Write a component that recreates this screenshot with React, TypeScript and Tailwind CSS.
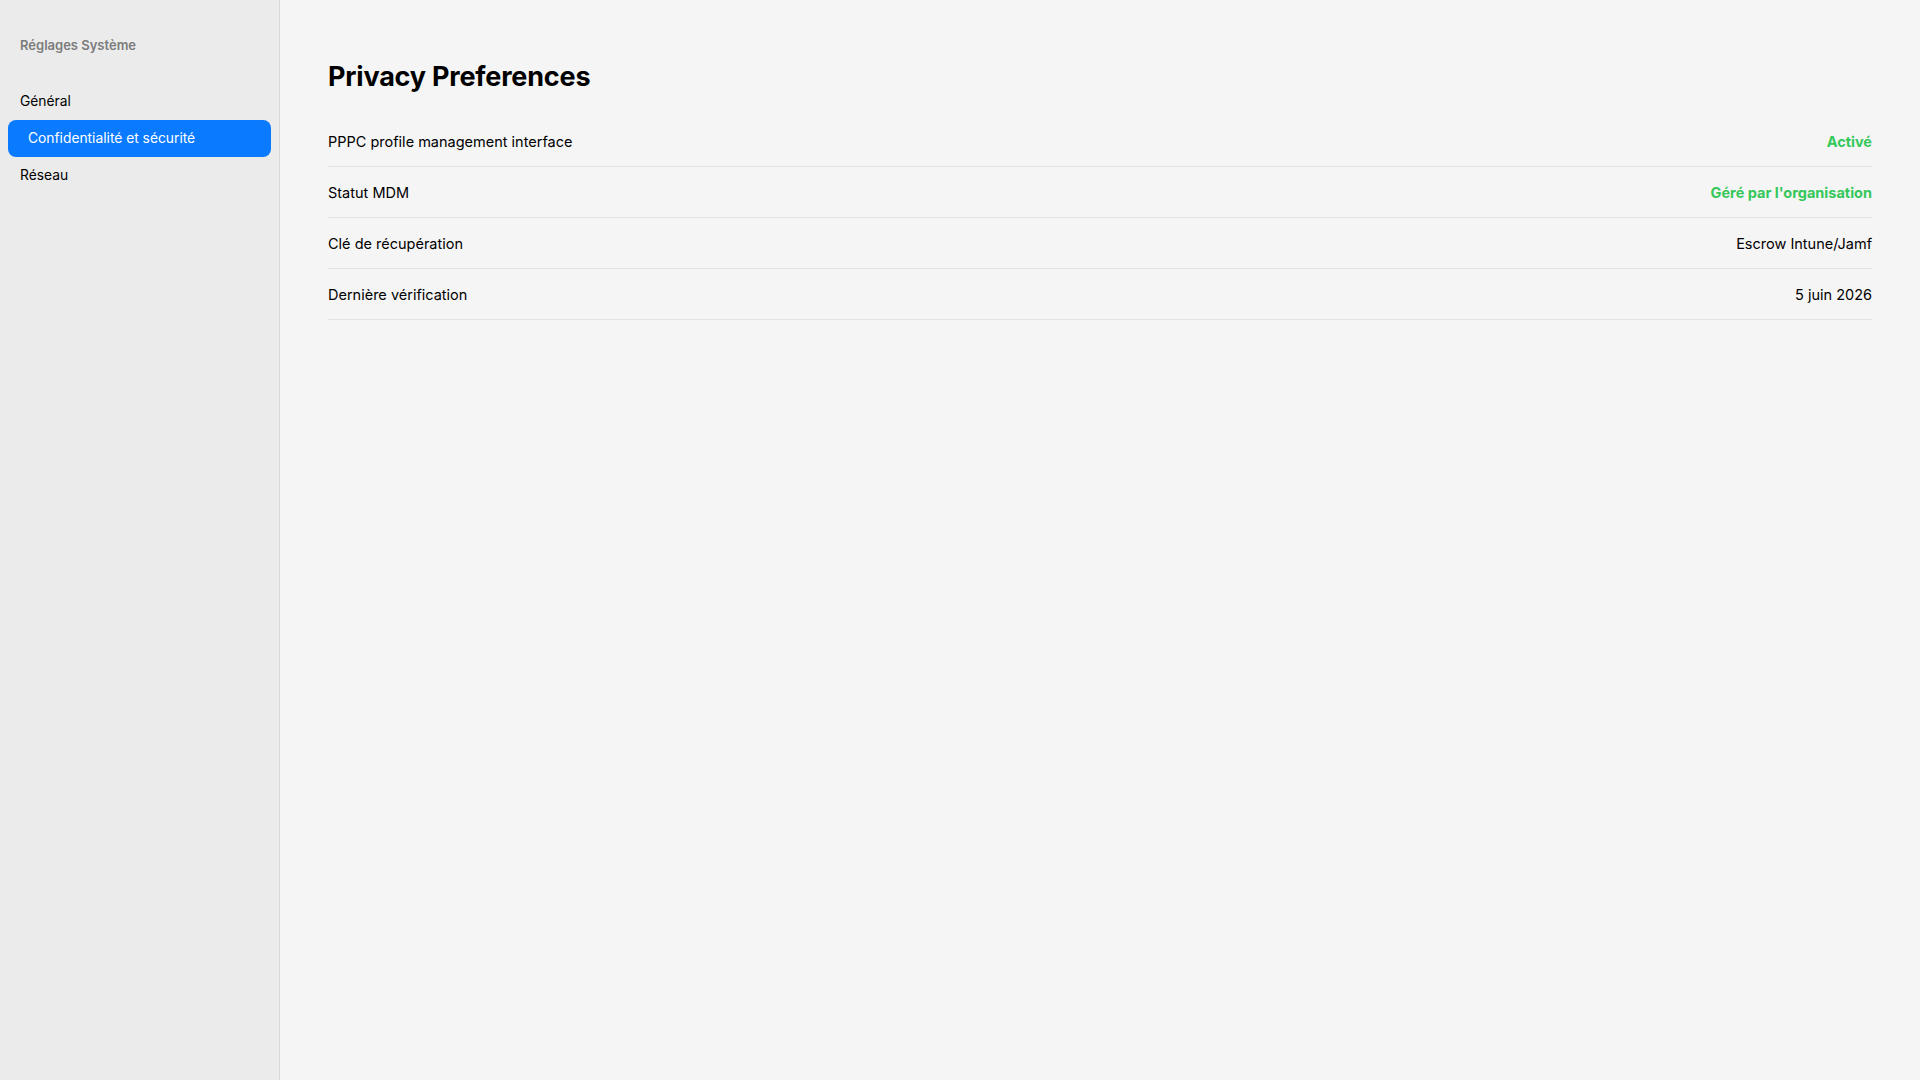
const rows = [
  { label: 'PPPC profile management interface', value: 'Activé', ok: true },
  { label: 'Statut MDM', value: "Géré par l'organisation", ok: true },
  { label: 'Clé de récupération', value: 'Escrow Intune/Jamf', ok: false },
  { label: 'Dernière vérification', value: '5 juin 2026', ok: false },
];

const navItems = ['Général', 'Confidentialité et sécurité', 'Réseau'];

export default function App() {
  return (
    <div className="flex h-screen w-full font-['Inter',sans-serif] text-black antialiased">
      <aside className="w-[280px] shrink-0 border-r border-[#d9d9d9] bg-[#ebebeb] px-2 pt-[36px]">
        <div className="px-3 text-[13px] font-semibold leading-[18px] text-[#7b7b7b]">Réglages Système</div>
        <nav className="mt-[29px] flex flex-col">
          {navItems.map((item) =>
            item === 'Confidentialité et sécurité' ? (
              <div
                key={item}
                className="flex h-[37px] items-center rounded-lg bg-[#0a7aff] px-5 text-[13.8px] text-white"
              >
                {item}
              </div>
            ) : (
              <div key={item} className="flex h-[37px] items-center px-3 text-[13.8px]">
                {item}
              </div>
            )
          )}
        </nav>
      </aside>

      <main className="flex-1 bg-[#f5f5f5] px-12 pt-[60px]">
        <h1 className="text-[27px] font-bold leading-[34px] tracking-[-0.2px]">Privacy Preferences</h1>
        <div className="mt-[22px]">
          {rows.map((row) => (
            <div
              key={row.label}
              className="flex items-center justify-between border-b border-[#e2e2e2] pt-[16px] pb-[14px] text-[14.5px] leading-[20px]"
            >
              <span>{row.label}</span>
              <span className={row.ok ? 'font-bold text-[#34c759]' : ''}>{row.value}</span>
            </div>
          ))}
        </div>
      </main>
    </div>
  );
}
